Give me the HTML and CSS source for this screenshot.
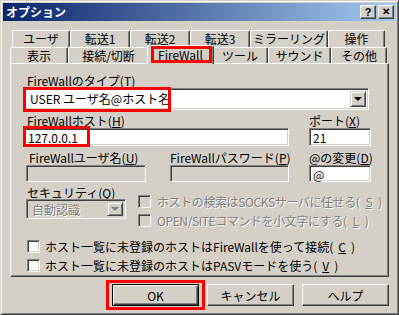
FILE: index.html
```html
<!DOCTYPE html>
<html lang="ja">
<head>
    <meta charset="UTF-8">
    <title>オプション</title>
    <link rel="stylesheet" href="styles.css">
</head>
<body>
    <div class="window">
        <div class="titlebar">
            <span class="title">オプション</span>
            <div class="title-buttons">
                <span class="tbtn">?</span>
                <span class="tbtn close">✕</span>
            </div>
        </div>

        <div class="content">
            <div class="tab-row back">
                <div class="tab w58">ユーザ</div>
                <div class="tab w60">転送1</div>
                <div class="tab w60">転送2</div>
                <div class="tab w60">転送3</div>
                <div class="tab w78">ミラーリング</div>
                <div class="tab w57">操作</div>
            </div>
            <div class="tab-row front">
                <div class="tab w58">表示</div>
                <div class="tab w81">接続/切断</div>
                <div class="tab selected">FireWall<span class="mark mark-tab"></span></div>
                <div class="tab w56">ツール</div>
                <div class="tab w63">サウンド</div>
                <div class="tab w56">その他</div>
            </div>

            <div class="panel">
                <div class="field-label">FireWallのタイプ(<u>T</u>)</div>
                <div class="combo wide">
                    <span class="combo-text">USER ユーザ名@ホスト名</span>
                    <span class="drop"><span class="arrow"></span></span>
                    <span class="mark mark-type"></span>
                </div>

                <div class="row row-host">
                    <div class="group host">
                        <div class="field-label">FireWallホスト(<u>H</u>)</div>
                        <div class="edit">127.0.0.1<span class="mark mark-host"></span></div>
                    </div>
                    <div class="group small">
                        <div class="field-label flush">ポート(<u>X</u>)</div>
                        <div class="edit">21</div>
                    </div>
                </div>

                <div class="row row-user">
                    <div class="group user">
                        <div class="field-label">FireWallユーザ名(<u>U</u>)</div>
                        <div class="edit disabled"></div>
                    </div>
                    <div class="group pass">
                        <div class="field-label flush">FireWallパスワード(<u>P</u>)</div>
                        <div class="edit disabled"></div>
                    </div>
                    <div class="group small">
                        <div class="field-label flush">@の変更(<u>D</u>)</div>
                        <div class="edit">@</div>
                    </div>
                </div>

                <div class="row row-security">
                    <div class="group security">
                        <div class="field-label">セキュリティ(<u>Q</u>)</div>
                        <div class="combo short disabled">
                            <span class="combo-text">自動認識</span>
                            <span class="drop"><span class="arrow"></span></span>
                        </div>
                    </div>
                    <div class="checks">
                        <div class="check disabled"><span class="box"></span>ホストの検索はSOCKSサーバに任せる(<u>S</u>)</div>
                        <div class="check disabled"><span class="box"></span>OPEN/SITEコマンドを小文字にする(<u>L</u>)</div>
                    </div>
                </div>

                <div class="check main"><span class="box"></span>ホスト一覧に未登録のホストはFireWallを使って接続(<u>C</u>)</div>
                <div class="check main second"><span class="box"></span>ホスト一覧に未登録のホストはPASVモードを使う(<u>V</u>)</div>
            </div>

            <div class="buttons">
                <div class="button default">OK<span class="mark mark-ok"></span></div>
                <div class="button">キャンセル</div>
                <div class="button">ヘルプ</div>
            </div>
        </div>
    </div>
</body>
</html>
```

FILE: styles.css
```css
* {
    box-sizing: border-box;
}
body {
    margin: 0;
    background: #d4d0c8;
    font-family: "Noto Sans CJK JP", "Noto Sans", sans-serif;
    font-size: 12px;
    color: #000;
}
u {
    text-decoration: underline;
}
.window {
    width: 399px;
    height: 315px;
    padding: 2px;
    background: #d4d0c8;
    border: 1px solid;
    border-color: #d4d0c8 #404040 #404040 #d4d0c8;
    box-shadow: inset 1px 1px #fff, inset -1px -1px #808080;
}

/* title bar */
.titlebar {
    height: 18px;
    display: flex;
    align-items: center;
    justify-content: space-between;
    padding: 0 2px 0 3px;
    background: linear-gradient(to right, #0a246a, #a6caf0);
}
.title {
    color: #fff;
    font-weight: bold;
    line-height: 14px;
}
.title-buttons {
    display: flex;
    gap: 2px;
}
.tbtn {
    width: 16px;
    height: 14px;
    display: flex;
    align-items: center;
    justify-content: center;
    background: #d4d0c8;
    border: 1px solid;
    border-color: #fff #404040 #404040 #fff;
    box-shadow: inset -1px -1px #808080;
    font: bold 11px "Liberation Sans", sans-serif;
    line-height: 1;
}
.tbtn.close {
    font-size: 10px;
}

.content {
    padding: 9px 7px 0 7px;
}

/* tabs */
.tab-row {
    display: flex;
}
.tab-row.back {
    height: 17px;
    padding-left: 2px;
}
.tab-row.front {
    height: 16px;
}
.tab {
    height: 100%;
    display: flex;
    align-items: center;
    justify-content: center;
    line-height: 13px;
    white-space: nowrap;
    background: #d4d0c8;
    border-top: 1px solid #fff;
    border-left: 1px solid #fff;
    border-right: 1px solid #404040;
    box-shadow: inset -1px 0 #808080;
    border-radius: 2px 2px 0 0;
}
.tab-row.back .tab {
    padding-bottom: 1px;
}
.w56 { width: 56px; }
.w57 { width: 57px; }
.w58 { width: 58px; }
.w60 { width: 60px; }
.w63 { width: 63px; }
.w78 { width: 78px; }
.w81 { width: 81px; }
.tab.selected {
    position: relative;
    z-index: 1;
    width: 67px;
    height: 19px;
    margin: -2px -2px 0 -2px;
    align-self: flex-start;
    padding-bottom: 2px;
}

/* red annotation boxes */
.mark {
    position: absolute;
    border: 3px solid #f00;
    pointer-events: none;
}
.mark-tab {
    left: 3px;
    top: 0;
    width: 61px;
    height: 17px;
}
.mark-type {
    left: -2px;
    top: -2px;
    width: 148px;
    height: 25px;
}
.mark-host {
    left: -2px;
    top: -3px;
    width: 67px;
    height: 21px;
}
.mark-ok {
    left: -7px;
    top: -5px;
    width: 99px;
    height: 30px;
}

/* tab page */
.panel {
    height: 214px;
    padding: 11px 0 0 13px;
    border: 1px solid;
    border-color: #fff #404040 #404040 #fff;
    box-shadow: inset -1px -1px #808080;
}
.field-label {
    height: 13px;
    line-height: 11px;
    padding-left: 3px;
    white-space: nowrap;
}
.field-label.flush {
    padding-left: 0;
}

.combo,
.edit {
    position: relative;
    background: #fff;
    border: 1px solid;
    border-color: #808080 #fff #fff #808080;
    box-shadow: inset 1px 1px #404040, inset -1px -1px #d4d0c8;
}
.combo {
    display: flex;
    align-items: center;
    padding: 2px;
}
.combo.wide {
    width: 345px;
    height: 22px;
}
.combo.short {
    width: 100px;
    height: 20px;
}
.combo-text {
    flex: 1;
    padding-left: 3px;
    line-height: 14px;
    white-space: nowrap;
}
.drop {
    width: 16px;
    height: 100%;
    display: flex;
    align-items: center;
    justify-content: center;
    background: #d4d0c8;
    border: 1px solid;
    border-color: #d4d0c8 #404040 #404040 #d4d0c8;
    box-shadow: inset 1px 1px #fff, inset -1px -1px #808080;
}
.arrow {
    width: 0;
    height: 0;
    border-left: 4px solid transparent;
    border-right: 4px solid transparent;
    border-top: 4px solid #000;
}
.combo.disabled {
    background: #d4d0c8;
}
.combo.disabled .combo-text {
    padding-top: 2px;
    color: #808080;
    text-shadow: 1px 1px #fff;
}
.combo.disabled .arrow {
    border-top-color: #808080;
}

.edit {
    height: 18px;
    padding: 1px 0 0 3px;
    line-height: 15px;
}
.edit.disabled {
    background: #d4d0c8;
}

.row {
    display: flex;
}
.row-host {
    margin-top: 5px;
    gap: 20px;
}
.row-user {
    margin-top: 6px;
    padding-left: 2px;
    gap: 24px;
}
.row-user .group.small {
    margin-left: -4px;
}
.row-user .edit {
    height: 17px;
}
.row-security {
    margin-top: 6px;
    padding-left: 2px;
}
.host { width: 265px; }
.small { width: 62px; }
.user { width: 120px; }
.pass { width: 119px; }
.security .field-label {
    height: 11px;
    line-height: 9px;
    padding-left: 1px;
}

.checks {
    margin-left: 12px;
    margin-top: 7px;
    display: flex;
    flex-direction: column;
    gap: 6px;
}
.check {
    display: flex;
    align-items: center;
    gap: 5px;
    height: 13px;
    line-height: 13px;
    white-space: nowrap;
}
.box {
    width: 13px;
    height: 13px;
    flex: none;
    background: #fff;
    border: 1px solid;
    border-color: #808080 #fff #fff #808080;
    box-shadow: inset 1px 1px #404040, inset -1px -1px #d4d0c8;
}
.check.disabled {
    gap: 6px;
    color: #808080;
    text-shadow: 1px 1px #fff;
    letter-spacing: -0.4px;
}
.check.disabled .box {
    background: #d4d0c8;
}
.check.main {
    margin-top: 13px;
    padding-left: 3px;
}
.check.main.second {
    margin-top: 6px;
}

/* dialog buttons */
.buttons {
    display: flex;
    justify-content: flex-end;
    gap: 8px;
    margin-top: 7px;
}
.button {
    position: relative;
    width: 87px;
    height: 22px;
    display: flex;
    align-items: center;
    justify-content: center;
    line-height: 13px;
    border: 1px solid;
    border-color: #fff #404040 #404040 #fff;
    box-shadow: inset -1px -1px #808080;
}
.button.default {
    border-color: #000;
    box-shadow: inset 1px 1px #fff, inset -1px -1px #404040, inset -2px -2px #808080;
}
```
